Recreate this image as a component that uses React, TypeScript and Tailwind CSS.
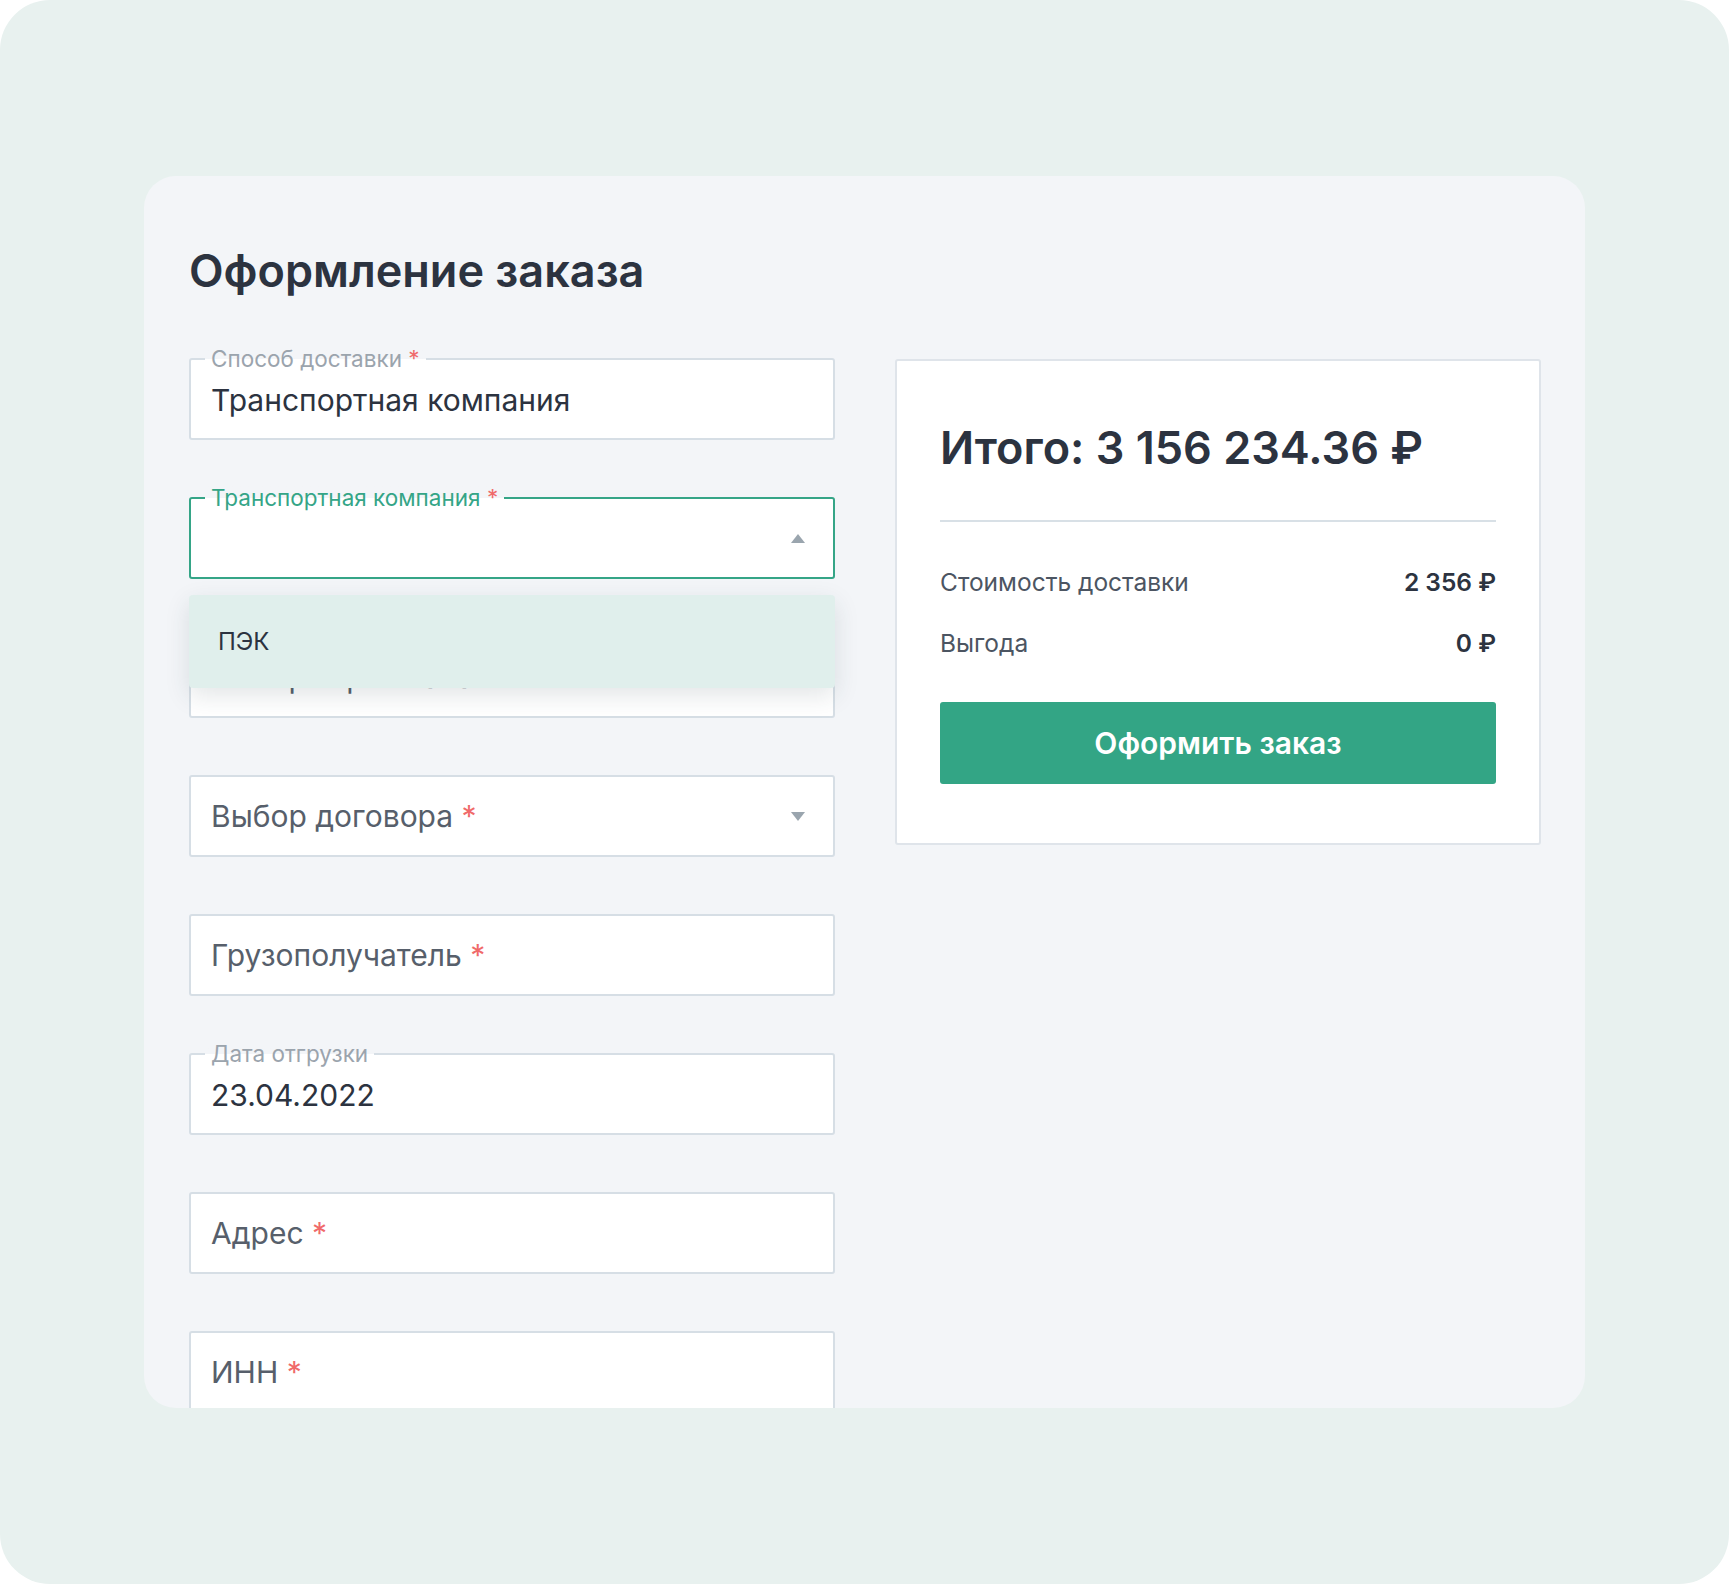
import React from "react";

const font = { fontFamily: "Inter, 'Noto Sans', sans-serif" };

function Star() {
  return <span className="text-[#f06a6a]"> *</span>;
}

function FloatLabel({ text, star, green }: { text: string; star?: boolean; green?: boolean }) {
  return (
    <span
      className={
        "absolute left-[14px] top-[-13px] px-[6px] text-[22.5px] leading-[24px] whitespace-nowrap bg-linear-to-b from-[#f3f5f8] from-50% to-white to-50% " +
        (green ? "text-[#35a587]" : "text-[#9ba4ad]")
      }
    >
      {text}
      {star && <Star />}
    </span>
  );
}

function Arrow({ up }: { up?: boolean }) {
  return (
    <svg width="14" height="9" viewBox="0 0 14 9" className="ml-auto shrink-0">
      {up ? <path d="M7 0 L14 9 L0 9 Z" fill="#9aa5ae" /> : <path d="M0 0 L14 0 L7 9 Z" fill="#9aa5ae" />}
    </svg>
  );
}

export default function App() {
  return (
    <div className="w-[1729px] h-[1584px] bg-white" style={font}>
      <div className="w-full h-full rounded-[50px] bg-[#e8f1ef] pt-[176px] px-[144px]">
        <div className="h-[1232px] rounded-[32px] bg-[#f3f5f8] overflow-hidden pl-[45px] pr-[44px] pt-[70px]">
          <h1 className="text-[45px] leading-[50px] font-semibold text-[#2c3340]">
            Оформление заказа
          </h1>
          <div className="mt-[62px] flex items-start gap-[60px]">
            {/* Left column: fields */}
            <div className="w-[646px] flex flex-col gap-[57px]">
              <div className="relative h-[82px] border-2 border-[#d6dee5] rounded-[3px] bg-white flex items-center px-[20px] pt-[2px]">
                <FloatLabel text="Способ доставки" star />
                <span className="text-[30px] text-[#2c3340]">Транспортная компания</span>
              </div>

              <div className="relative">
                <div className="relative h-[82px] border-2 border-[#35a587] rounded-[3px] bg-white flex items-center pl-[20px] pr-[28px]">
                  <FloatLabel text="Транспортная компания" star green />
                  <Arrow up />
                </div>
                <div className="absolute left-0 right-0 top-[98px] h-[93px] z-10 rounded-[4px] bg-[#e0efec] shadow-[0_8px_24px_rgba(40,60,70,0.13)] flex items-center pl-[29px]">
                  <span className="text-[24px] text-[#2c3340]">ПЭК</span>
                </div>
              </div>

              <div className="relative h-[82px] border-2 border-[#d6dee5] rounded-[3px] bg-white flex items-center px-[20px]">
                <span className="text-[30px] text-[#575f6b]">Выбор терминала</span>
              </div>

              <div className="relative h-[82px] border-2 border-[#d6dee5] rounded-[3px] bg-white flex items-center pl-[20px] pr-[28px]">
                <span className="text-[30px] text-[#575f6b]">
                  Выбор договора
                  <Star />
                </span>
                <Arrow />
              </div>

              <div className="relative h-[82px] border-2 border-[#d6dee5] rounded-[3px] bg-white flex items-center px-[20px]">
                <span className="text-[30px] text-[#575f6b]">
                  Грузополучатель
                  <Star />
                </span>
              </div>

              <div className="relative h-[82px] border-2 border-[#d6dee5] rounded-[3px] bg-white flex items-center px-[20px] pt-[2px]">
                <FloatLabel text="Дата отгрузки" />
                <span className="text-[30px] text-[#2c3340]">23.04.2022</span>
              </div>

              <div className="relative h-[82px] border-2 border-[#d6dee5] rounded-[3px] bg-white flex items-center px-[20px]">
                <span className="text-[30px] text-[#575f6b]">
                  Адрес
                  <Star />
                </span>
              </div>

              <div className="relative h-[82px] border-2 border-[#d6dee5] rounded-[3px] bg-white flex items-center px-[20px]">
                <span className="text-[30px] text-[#575f6b]">
                  ИНН
                  <Star />
                </span>
              </div>
            </div>

            {/* Right column: summary */}
            <div className="w-[646px] mt-[1px] border-2 border-[#dfe4ea] rounded-[3px] bg-white pl-[43px] pr-[43px] pt-[60px] pb-[59px]">
              <div className="text-[45px] leading-[53px] font-semibold text-[#2c3340]">Итого: 3 156 234.36 ₽</div>
              <div className="mt-[46px] h-[2px] bg-[#d8e0e6]" />
              <div className="mt-[44px] flex items-center justify-between text-[24.5px] leading-[32px]">
                <span className="text-[#4c5562]">Стоимость доставки</span>
                <span className="font-semibold text-[#2c3340]">2 356 ₽</span>
              </div>
              <div className="mt-[29px] flex items-center justify-between text-[24.5px] leading-[32px]">
                <span className="text-[#4c5562]">Выгода</span>
                <span className="font-semibold text-[#2c3340]">0 ₽</span>
              </div>
              <button className="mt-[43px] w-full h-[82px] rounded-[3px] bg-[#33a585] text-white text-[30px] font-semibold flex items-center justify-center">
                Оформить заказ
              </button>
            </div>
          </div>
        </div>
      </div>
    </div>
  );
}
